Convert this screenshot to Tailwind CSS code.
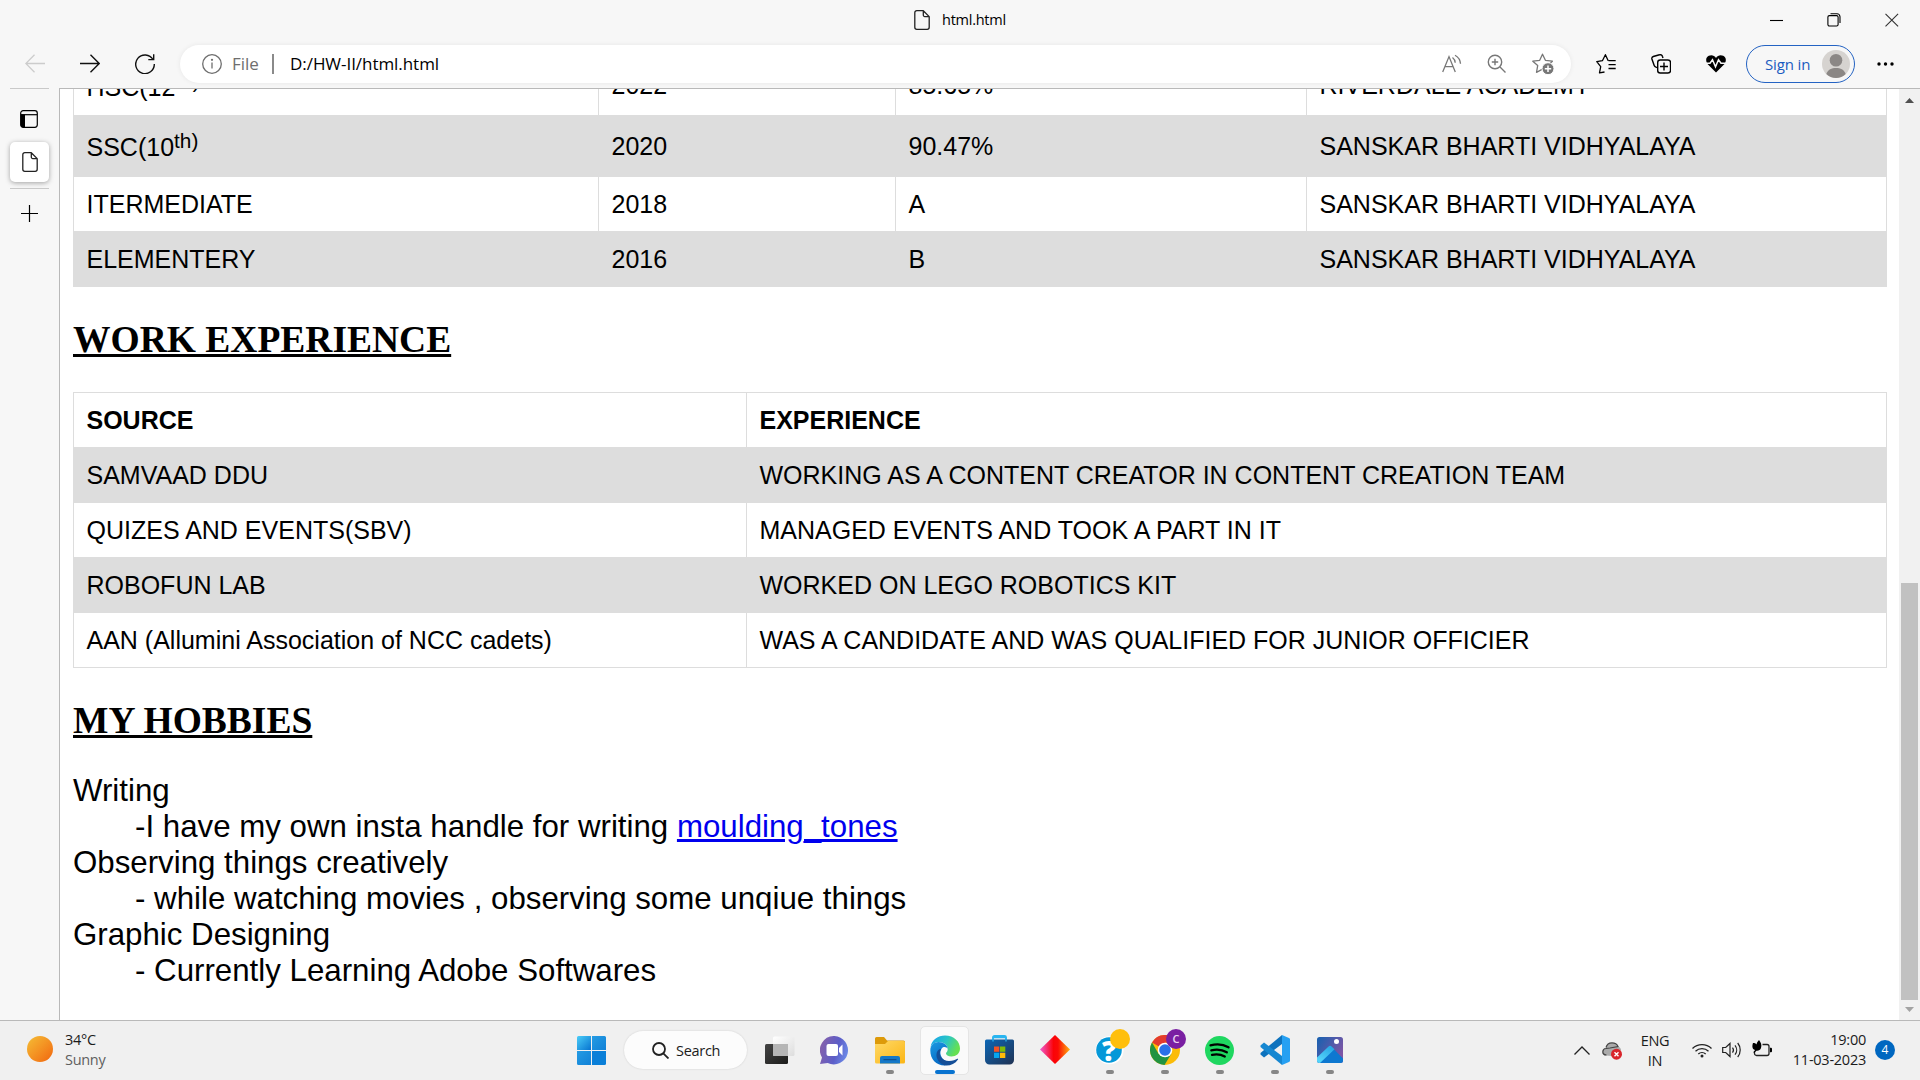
<!DOCTYPE html>
<html lang="en">
<head>
<meta charset="utf-8">
<title>html.html</title>
<script src="https://cdn.jsdelivr.net/npm/@tailwindcss/browser@4"></script>
</head>
<body class="flex h-[1080px] w-[1920px] flex-col overflow-hidden bg-[#f7f7f7] font-['Open_Sans','Noto_Sans',sans-serif] text-black">

<!-- title bar -->
<header class="flex h-10 shrink-0 items-center">
  <div class="flex flex-1 items-center gap-[12px] pl-[914px]">
    <svg class="h-5 w-4" viewBox="0 0 16 20" fill="none" stroke="#222" stroke-width="1.3" stroke-linejoin="round"><path d="M9.300.7H2.800a2 2 0 0 0-2 2v14.600a2 2 0 0 0 2 2h10.400a2 2 0 0 0 2-2V6.600zM9.300.7v4.400a1.500 1.500 0 0 0 1.500 1.500h4.400"/></svg>
    <span class="w-fit text-[14.5px] leading-5 tracking-[-0.25px]">html.html</span>
  </div>
  <div class="flex w-[150px] items-center pb-px text-black">
    <svg class="mr-[43px] h-[14px] w-[14px]" viewBox="0 0 14 14" stroke="#000" stroke-width="1.1"><path d="M0 7.500h13"/></svg>
    <svg class="mr-[44px] h-[14px] w-[14px]" viewBox="0 0 14 14" fill="none" stroke="#000" stroke-width="1.1"><rect x=".9" y="2.600" width="10.200" height="10.400" rx="1.500"/><path d="M3.500.8H10a3 3 0 0 1 3 3V10"/></svg>
    <svg class="h-[14px] w-[14px]" viewBox="0 0 14 14" stroke="#333" stroke-width="1.1"><path d="M.5.8l12.600 12.600M13.100.8L.5 13.400"/></svg>
  </div>
</header>

<!-- toolbar -->
<nav class="flex h-12 shrink-0 items-center">
  <div class="flex w-[180px] items-center gap-[35px] pl-[25px]">
    <svg class="h-5 w-5" viewBox="0 0 20 20" fill="none" stroke="#ccc" stroke-width="1.3"><path d="M20 9.500H1M9.500.8L.8 9.500l8.700 8.700"/></svg>
    <svg class="h-5 w-5" viewBox="0 0 20 20" fill="none" stroke="#111" stroke-width="1.4"><path d="M0 9.500h19M10.500.8l8.700 8.700-8.700 8.700"/></svg>
    <svg class="h-5 w-5" viewBox="0 0 20 20" fill="none" stroke="#111" stroke-width="1.4"><path d="M18 5.500A9.300 9.300 0 1 0 19.300 10M18.700.3v5.300h-5.400"/></svg>
  </div>
  <div class="flex h-[38px] w-[1391px] items-center rounded-full bg-white pl-[22px] shadow-[0_0_5px_rgba(0,0,0,0.07)]">
    <svg class="h-5 w-5" viewBox="0 0 20 20" fill="none" stroke="#6e6e6e" stroke-width="1.3"><circle cx="10" cy="10" r="9.300"/><path d="M10 8.500v6"/><circle cx="10" cy="5.800" r=".5"/></svg>
    <span class="ml-[10px] w-[30px] text-[17px] text-[#6e6e6e]">File</span>
    <span class="ml-[10px] h-5 w-[2px] bg-[#8a8a8a]"></span>
    <span class="ml-[16px] flex-1 text-[17px] tracking-[-0.050px]">D:/HW-II/html.html</span>
    <div class="flex items-center gap-[25px] pr-[17px]">
      <svg class="h-5 w-5" viewBox="0 0 20 20" fill="none" stroke="#777" stroke-width="1.3"><path d="M.7 18L7 2.600 13.300 18M3 12.700h8M10.500 3.500a7 7 0 0 1 2.700 5.300M13 1.200a10.500 10.500 0 0 1 5.500 8.600"/></svg>
      <svg class="h-5 w-5" viewBox="0 0 20 20" fill="none" stroke="#777" stroke-width="1.4"><circle cx="8" cy="8" r="6.700"/><path d="M13 13l5.500 5.500M8 4.800v6.400M4.800 8h6.400"/></svg>
      <svg class="h-[22px] w-[22px]" viewBox="0 0 22 22"><path d="M10.500 1.200l2.900 6.100 7 .9-5.100 4.700 1.100 6.200-5.900-2.900-6 3.100 1.200-6.700L.8 8.200l6.900-.9z" fill="none" stroke="#777" stroke-width="1.3" stroke-linejoin="round"/><circle cx="16" cy="15.700" r="6" fill="#777" stroke="#fff"/><path d="M16 12.500v6.400M12.800 15.700h6.400" stroke="#fff" stroke-width="1.500"/></svg>
    </div>
  </div>
  <div class="flex items-center pl-[25px]">
    <svg class="mr-[35px] h-5 w-5" viewBox="0 0 20 20" fill="none" stroke="#000" stroke-width="1.3" stroke-linejoin="round"><path d="M8.500 18l-5 .9 1.200-6.300L.8 7.600l5.600-.9 3-6 2.800 6M12.500 6.700h7.200M12.500 10.700h7.200M12.500 14.500h7.200"/></svg>
    <svg class="mr-[35px] h-5 w-5" viewBox="0 0 20 20" fill="none" stroke="#000" stroke-width="1.400"><rect x="6.700" y="6" width="12.800" height="13" rx="2.500"/><path d="M13 8.500v8M9 12.500h8M6 13.500l-1-.3a3 3 0 0 1-1.800-1.800L.9 5a2.200 2.200 0 0 1 1.400-2.500L8.500.8A2.300 2.300 0 0 1 11.400 2.300l.6 1.700"/></svg>
    <svg class="mr-[20px] h-5 w-5" viewBox="0 0 20 20"><path d="M10 18.500L1.500 10C-.8 6.500 0 3 2.800 1.800 5.500.5 8.500 1.500 10 4c1.500-2.500 4.500-3.500 7.200-2.200C20 3 20.800 6.500 18.500 10z" fill="#000"/><path d="M0 9.300h4l2.500-3.500 3 7 3-7L15 9.300h5" fill="none" stroke="#f7f7f7" stroke-width="1.500"/></svg>
    <div class="flex h-[38px] w-[109px] items-center justify-between rounded-full border-[1.5px] border-[#2463c3] pl-[18px] pr-[4px]">
      <span class="text-[15px] tracking-[-0.150px] text-[#1b5cc0]">Sign in</span>
      <svg class="h-7 w-7" viewBox="0 0 28 28"><circle cx="14" cy="14" r="14" fill="#d6d3d0"/><circle cx="14" cy="10.300" r="6.300" fill="#8b8785"/><path d="M4.300 24C6 19.500 9.500 18 14 18s8 1.500 9.700 6A14 14 0 0 1 4.300 24z" fill="#8b8785"/></svg>
    </div>
    <svg class="ml-[22px] h-1 w-[17px]" viewBox="0 0 17 4"><circle cx="2" cy="2" r="1.700"/><circle cx="8.500" cy="2" r="1.700"/><circle cx="15" cy="2" r="1.700"/></svg>
  </div>
</nav>

<div class="flex h-[932px] shrink-0">
  <!-- vertical tabs -->
  <aside class="flex w-[59px] shrink-0 flex-col items-center">
    <div class="h-px w-[39px] bg-[#c9c9c9]"></div>
    <svg class="mr-[2px] mt-[21px] h-[18px] w-[18px]" viewBox="0 0 18 18"><rect x=".7" y=".7" width="16.600" height="16.600" rx="2.500" fill="none" stroke="#000" stroke-width="1.200"/><path d="M1 4.700h16" stroke="#000" stroke-width="1.200"/><path d="M.7 4.500H5v12.800H3a2.300 2.300 0 0 1-2.300-2.300z"/></svg>
    <div class="mt-[14px] flex h-10 w-[39px] items-center justify-center rounded-[5px] bg-white shadow-[0_1px_5px_rgba(0,0,0,0.35)]">
      <svg class="h-5 w-4" viewBox="0 0 16 20" fill="none" stroke="#222" stroke-width="1.300" stroke-linejoin="round"><path d="M9.300.7H2.800a2 2 0 0 0-2 2v14.600a2 2 0 0 0 2 2h10.400a2 2 0 0 0 2-2V6.600zM9.300.7v4.400a1.500 1.500 0 0 0 1.500 1.500h4.400"/></svg>
    </div>
    <div class="mt-[6px] h-px w-[39px] bg-[#c9c9c9]"></div>
    <svg class="mt-[16px] h-[17px] w-[17px]" viewBox="0 0 17 17" stroke="#000" stroke-width="1.200"><path d="M8.500 0v17M0 8.500h17"/></svg>
  </aside>

  <!-- page -->
  <main class="flex-1 overflow-hidden border-l border-t border-[#b9b9b9] bg-white pl-[13px] font-['Liberation_Sans',Arial,sans-serif]">
    <table class="-mt-[36px] w-[1814px] table-fixed border-collapse border border-[#ddd] text-[25px] leading-[30px] [&_td]:border [&_td]:border-[#ddd] [&_td]:pl-[12.500px]">
      <colgroup><col class="w-[525px]"><col class="w-[297px]"><col class="w-[411px]"><col></colgroup>
      <tbody>
        <tr class="h-[62px]"><td class="pt-[5px] pb-0">HSC(12<sup class="-top-[8.500px] text-[20.800px]">th)</sup></td><td class="py-0">2022</td><td class="py-0">85.65%</td><td class="py-0">RIVERDALE ACADEMY</td></tr>
        <tr class="h-[61px] bg-[#ddd]"><td class="pt-[2px] pb-0">SSC(10<sup class="-top-[8.500px] text-[20.800px]">th)</sup></td><td class="pt-0 pb-px">2020</td><td class="pt-0 pb-px">90.47%</td><td class="pt-0 pb-px">SANSKAR BHARTI VIDHYALAYA</td></tr>
        <tr class="h-[55px] [&>td]:pt-0 [&>td]:pb-px"><td>ITERMEDIATE</td><td>2018</td><td>A</td><td>SANSKAR BHARTI VIDHYALAYA</td></tr>
        <tr class="h-[55px] bg-[#ddd] [&>td]:pt-0 [&>td]:pb-px"><td>ELEMENTERY</td><td>2016</td><td>B</td><td>SANSKAR BHARTI VIDHYALAYA</td></tr>
      </tbody>
    </table>

    <h2 class="mt-[31px] h-[43px] font-['Liberation_Serif',serif] text-[37.500px] font-bold leading-[43px] underline">WORK EXPERIENCE</h2>

    <table class="mt-[31px] w-[1814px] table-fixed border-collapse border border-[#ddd] text-left text-[25px] leading-[30px] [&_td]:border [&_td]:border-[#ddd] [&_td]:py-0 [&_td]:pl-[12.500px] [&_th]:border [&_th]:border-[#ddd] [&_th]:py-0 [&_th]:pl-[12.500px]">
      <colgroup><col class="w-[673px]"><col></colgroup>
      <tbody>
        <tr class="h-[55px]"><th>SOURCE</th><th>EXPERIENCE</th></tr>
        <tr class="h-[55px] bg-[#ddd]"><td>SAMVAAD DDU</td><td>WORKING AS A CONTENT CREATOR IN CONTENT CREATION TEAM</td></tr>
        <tr class="h-[55px]"><td>QUIZES AND EVENTS(SBV)</td><td>MANAGED EVENTS AND TOOK A PART IN IT</td></tr>
        <tr class="h-[55px] bg-[#ddd]"><td>ROBOFUN LAB</td><td>WORKED ON LEGO ROBOTICS KIT</td></tr>
        <tr class="h-[55px]"><td>AAN (Allumini Association of NCC cadets)</td><td>WAS A CANDIDATE AND WAS QUALIFIED FOR JUNIOR OFFICIER</td></tr>
      </tbody>
    </table>

    <h2 class="mt-[31px] h-[43px] font-['Liberation_Serif',serif] text-[37.500px] font-bold leading-[43px] underline">MY HOBBIES</h2>

    <dl class="mt-[31px] text-[31.250px] leading-[36px]">
      <dt>Writing</dt>
      <dd class="pl-[62px]">-I have my own insta handle for writing <a class="text-[#0000ee] underline">moulding_tones</a></dd>
      <dt>Observing things creatively</dt>
      <dd class="pl-[62px]">- while watching movies , observing some unqiue things</dd>
      <dt>Graphic Designing</dt>
      <dd class="pl-[62px]">- Currently Learning Adobe Softwares</dd>
    </dl>
  </main>

  <!-- scrollbar -->
  <div class="flex w-[21px] shrink-0 flex-col items-center border-t border-[#b9b9b9] bg-[#f1f1f1]">
    <svg class="mt-[9px] h-[5px] w-[9px]" viewBox="0 0 9 5"><path d="M0 5l4.500-5L9 5z" fill="#505050"/></svg>
    <div class="mt-[480px] h-[417px] w-[17px] bg-[#c1c1c1]"></div>
    <svg class="mt-[7px] h-[5px] w-[9px]" viewBox="0 0 9 5"><path d="M0 0l4.500 5L9 0z" fill="#a3a3a3"/></svg>
  </div>
</div>

<!-- taskbar -->
<footer class="flex h-[60px] shrink-0 border-t border-[#b9b9b9] bg-[#f0f0f0] text-[14.500px] leading-5 text-[#1b1b1b]">
  <div class="flex w-[564px] gap-3 pl-[27px] pt-[8px]">
    <div class="mt-[7px] h-[26px] w-[26px] rounded-full bg-linear-to-br from-[#f3bd35] to-[#f0640c]"></div>
    <div class="pt-px tracking-[-0.3px]"><p>34°C</p><p class="text-[#5f5f5f]">Sunny</p></div>
  </div>
  <div class="flex w-[60px] justify-center pt-[15px] pr-[5px]">
    <svg class="h-[29px] w-[29px]" viewBox="0 0 29 29"><defs><linearGradient id="win" x1="0" y1="0" x2="1" y2="1" gradientUnits="objectBoundingBox"><stop stop-color="#4bcdf8"/><stop offset="1" stop-color="#0673d0"/></linearGradient><linearGradient id="win2" x2="1" y2="1"><stop stop-color="#2fa9ea"/><stop offset="1" stop-color="#0673d0"/></linearGradient></defs><path d="M1.500 0H14v14H0V1.500A1.500 1.500 0 0 1 1.500 0z" fill="url(#win)"/><path d="M15 0h12.500A1.500 1.500 0 0 1 29 1.500V14H15zM0 15h14v14H1.500A1.500 1.500 0 0 1 0 27.500z" fill="url(#win2)"/><path d="M15 15h14v12.500a1.500 1.500 0 0 1-1.500 1.500H15z" fill="#0a7fd8"/></svg>
  </div>
  <div class="mt-[10px] flex h-[38px] w-[123px] items-center rounded-full bg-[#fcfcfc] pl-[28px] shadow-[0_0_2px_rgba(0,0,0,0.15)]">
    <svg class="h-[17px] w-[17px]" viewBox="0 0 17 17" fill="none" stroke="#222" stroke-width="1.800"><circle cx="7" cy="7" r="6"/><path d="M11.300 11.300l5.200 5.200"/></svg>
    <span class="ml-[7px] pt-px tracking-[-0.3px]">Search</span>
  </div>
  <div class="flex pl-[5px] [&>div]:relative [&>div]:flex [&>div]:w-[55px] [&>div]:justify-center">
    <div><svg class="mt-[15px] h-[29px] w-[30px]" viewBox="0 0 30 29"><defs><linearGradient id="tv" x1="0" y1="0" x2="1" y2="1"><stop stop-color="#444"/><stop offset="1" stop-color="#1c1c1a"/></linearGradient><linearGradient id="tw" x1="0" y1="0" x2="1" y2="1"><stop stop-color="#fff"/><stop offset="1" stop-color="#ddd"/></linearGradient></defs><rect y="8" width="23" height="20" rx="1.500" fill="url(#tv)"/><rect x="8" y=".5" width="21.500" height="19.500" rx="1.500" fill="url(#tw)"/><path d="M8 8h15v12H9.500A1.500 1.500 0 0 1 8 18.500z" fill="#b5b5b5"/></svg></div>
    <div><svg class="mt-[15px] h-[29px] w-[29px]" viewBox="0 0 29 29"><defs><linearGradient id="ch" x1="0" y1=".3" x2="1" y2=".6"><stop stop-color="#8660aa"/><stop offset=".6" stop-color="#5c5ec8"/><stop offset="1" stop-color="#6d8be8"/></linearGradient></defs><path d="M14.500 0a14.200 14.200 0 1 1-6.800 27L0 28l2-6.500A14.200 14.200 0 0 1 14.500 0z" fill="url(#ch)"/><rect x="6.500" y="8" width="11.500" height="12" rx="2" fill="#fff"/><path d="M19 12l3.500-3.500V19.500L19 16z" fill="#fff"/></svg></div>
    <div><svg class="mt-[16px] h-[27px] w-[30px]" viewBox="0 0 30 27"><defs><linearGradient id="fo" x2="1" y2="1"><stop stop-color="#ffd967"/><stop offset="1" stop-color="#fbb514"/></linearGradient></defs><path d="M0 1.500A1.500 1.500 0 0 1 1.500 0H9l3 3.500h16.500A1.500 1.500 0 0 1 30 5v3H0z" fill="#dd9a0a"/><path d="M0 7h10l3-3h15.500A1.500 1.500 0 0 1 30 5.500V25a1.500 1.500 0 0 1-1.500 1.500h-27A1.500 1.500 0 0 1 0 25z" fill="url(#fo)"/><path d="M5 26.500V21a2 2 0 0 1 2-2h16a2 2 0 0 1 2 2v5.500z" fill="#1478c8"/><path d="M9 22.700h12" stroke="#0d4f91" stroke-width="1.200" stroke-linecap="round"/></svg><i class="absolute bottom-[6px] h-1 w-2 rounded-full bg-[#868686]"></i></div>
    <div><div class="mt-[5px] flex h-[49px] w-[49px] justify-center rounded-[5px] border border-[#e5e5e5] bg-[#fafafa] pt-[8px]">
      <svg class="h-[31px] w-[30px]" viewBox="0 0 30 31"><defs><linearGradient id="eg" x1="0" y1="0" x2="1" y2=".4"><stop offset=".1" stop-color="#1aa5e8"/><stop offset=".55" stop-color="#2ac6c5"/><stop offset="1" stop-color="#66e052"/></linearGradient><linearGradient id="eb" x1="0" y1="0" x2=".5" y2="1"><stop stop-color="#1b9be2"/><stop offset="1" stop-color="#0668c4"/></linearGradient></defs><path d="M.5 12C2 4.500 8 .5 15 .5c9 0 15 6 15 13 0 5-4 8-8.500 8-3.500 0-5.500-1.500-5.500-3 0-1.200 1.700-1.500 1.700-4.500 0-4-4-7-9-7C5 7 2 9 .5 12z" fill="url(#eg)"/><path d="M.3 15.500C.3 10 4 7 8.500 7c5 0 9.200 3 9.200 7-1-2-4-2.800-6-.5-3 4-1 11 6 13.500l-3 3.500C6 30.500.3 24 .3 15.500z" fill="url(#eb)"/><path d="M11 14c-3.500 6 1 12 8 12 4 0 6.500-1 8.300-2.200.6-.4 1.100.1.700.7-3 4.500-8 6.500-13 6-6-2-9-7-8.500-11.500.3-3 2-5 4.500-5z" fill="#154f98"/></svg>
    </div><i class="absolute bottom-[6px] h-1 w-5 rounded-full bg-[#0873d0]"></i></div>
    <div><svg class="mt-[14px] h-[30px] w-[29px]" viewBox="0 0 29 30"><defs><linearGradient id="st" x2="1" y2="1"><stop stop-color="#0c66b5"/><stop offset="1" stop-color="#203253"/></linearGradient></defs><path d="M8 6V2.500A1.500 1.500 0 0 1 9.500 1h10A1.500 1.500 0 0 1 21 2.500V6" fill="none" stroke="#29b5f0" stroke-width="1.800"/><path d="M0 6A1.500 1.500 0 0 1 1.500 4.500h26A1.500 1.500 0 0 1 29 6v19a4.500 4.500 0 0 1-4.500 4.500h-20A4.500 4.500 0 0 1 0 25z" fill="url(#st)"/><path d="M8 6.500V2.500h13v4" fill="none" stroke="#29b5f0" stroke-width="1.300"/><path d="M9 11.500h5.300v5.300H9z" fill="#f35325"/><path d="M15 11.500h5.300v5.300H15z" fill="#81bc06"/><path d="M9 17.700h5.300V23H9z" fill="#05a6f0"/><path d="M15 17.700h5.300V23H15z" fill="#ffba08"/></svg></div>
    <div><svg class="mt-[14px] h-[30px] w-[30px]" viewBox="0 0 30 30"><defs><linearGradient id="di"><stop stop-color="#f05bd0"/><stop offset=".45" stop-color="#fb0308"/><stop offset=".6" stop-color="#fb0a05"/><stop offset="1" stop-color="#ffb010"/></linearGradient></defs><path d="M15 0l15 14.500L15 29 0 14.500z" fill="url(#di)"/></svg></div>
    <div><svg class="mt-[15px] h-[29px] w-[29px]" viewBox="0 0 29 29"><circle cx="14.500" cy="14.300" r="14" fill="#fff"/><circle cx="14" cy="14" r="12.800" fill="#0598d8"/></svg>
      <span class="absolute left-[13px] top-[13px] w-[28px] text-center text-[28px] font-extrabold leading-[32px] text-white">?</span>
      <i class="absolute left-[28px] top-[8px] h-5 w-5 rounded-full bg-[#ffbf0c]"></i><i class="absolute bottom-[6px] h-1 w-2 rounded-full bg-[#868686]"></i></div>
    <div><svg class="mt-[14px] h-[30px] w-[30px]" viewBox="0 0 30 30"><circle cx="15" cy="15" r="15" fill="#fbbc08"/><path d="M15 15V7.500h13A15 15 0 0 0 2 7.500z" fill="#e33b2e"/><path d="M2 7.500l6.500 11.300L15 22.500l-.5 7.500A15 15 0 0 1 2 7.500z" fill="#229342"/><path d="M14.500 30l7-11.500-6.500 3.800-6.500-3.500z" fill="#229342"/><circle cx="15" cy="15" r="7.300" fill="#fff"/><circle cx="15" cy="15" r="5.800" fill="#2a70e8"/></svg>
      <b class="absolute left-[29px] top-[8px] h-5 w-5 rounded-full bg-[#7a1fa2] text-center text-[11px] font-semibold text-[#ecd5f2]">C</b><i class="absolute bottom-[6px] h-1 w-2 rounded-full bg-[#868686]"></i></div>
    <div><svg class="mt-[15px] h-[29px] w-[29px]" viewBox="0 0 29 29"><circle cx="14.500" cy="14.500" r="14.500" fill="#1fd760"/><path d="M5.500 9.300c6-1.600 13-1 18 2M6.300 14.300c5.500-1.300 11-.7 15.500 2M7 18.800c4.500-1 9-.5 12.800 1.700" fill="none" stroke="#000" stroke-linecap="round" stroke-width="2.300"/></svg><i class="absolute bottom-[6px] h-1 w-2 rounded-full bg-[#868686]"></i></div>
    <div><svg class="mt-[14px] h-[30px] w-[30px]" viewBox="0 0 30 30"><path d="M22 0v9L4 22.500l-3.500-3V18z" fill="#0d72bd"/><path d="M22 30v-9L4 7.500l-3.500 3V12z" fill="#1687d1"/><path d="M22 0l7 3a1.700 1.700 0 0 1 1 1.700v20.600A1.700 1.700 0 0 1 29 27l-7 3z" fill="#26a0f2"/></svg><i class="absolute bottom-[6px] h-1 w-2 rounded-full bg-[#868686]"></i></div>
    <div><svg class="mt-[16px] h-[26px] w-[26px]" viewBox="0 0 26 26"><defs><linearGradient id="ph" x2="1" y2=".6"><stop stop-color="#1561b0"/><stop offset="1" stop-color="#8055a5"/></linearGradient><linearGradient id="pm" x1="0" y1="1" x2=".6" y2="0"><stop offset=".2" stop-color="#54d3fa"/><stop offset="1" stop-color="#2ba9e6"/></linearGradient></defs><rect width="26" height="26" rx="2.500" fill="url(#ph)"/><path d="M1 25l11-15.200a2 2 0 0 1 2.500 0L26 21.500v2A2.500 2.500 0 0 1 23.500 26H2.500z" fill="#0e78d0"/><path d="M0 20.500L11.300 9.700a2.500 2.500 0 0 1 3.500 0l2.700 2.600L3 26h-.5A2.500 2.500 0 0 1 0 23.500z" fill="url(#pm)"/><circle cx="19.500" cy="4.500" r="2.500" fill="#fff"/></svg><i class="absolute bottom-[6px] h-1 w-2 rounded-full bg-[#868686]"></i></div>
  </div>

  <!-- system tray -->
  <div class="ml-auto flex h-[58px] w-[346px] items-center">
    <svg class="h-[9px] w-4" viewBox="0 0 16 9" fill="none" stroke="#222" stroke-width="1.300"><path d="M.5 8.500L8 1l7.500 7.500"/></svg>
    <svg class="ml-[12px] mt-[2px] h-[18px] w-5" viewBox="0 0 20 18"><path d="M4 13.500C1 13.500 0 11.500.3 9.500.5 7.500 2 6 4 6c.5-3 3-5 6-5 2.500 0 4.700 1.200 5.700 3.500C18 5 19 6.500 19 8l-9 6z" fill="#aaa"/><path d="M4.500 13C2 13 .7 11.500.9 9.500 1.100 7.500 2.500 6.500 4 6.500l4-.5 8-1.500C15 2 12.500.8 10 .8 7 .8 4.700 2.700 4 5.500" fill="none" stroke="#444" stroke-width="1.200"/><circle cx="14.500" cy="12.200" r="5.500" fill="#d9252b"/><path d="M12.500 10.200l4 4m0-4l-4 4" stroke="#fff" stroke-width="1.400"/></svg>
    <div class="ml-[15px] w-[36px] pt-[2px] text-center tracking-[-0.3px]"><p>ENG</p><p>IN</p></div>
    <svg class="ml-[19px] h-[15px] w-5" viewBox="0 0 20 15" fill="none" stroke="#222" stroke-width="1.300"><path d="M.5 5.500a13.500 13.500 0 0 1 19 0M3.500 8.300a9.300 9.300 0 0 1 13 0M6.300 11a5.500 5.500 0 0 1 7.400 0"/><circle cx="10" cy="13" r="1.500" fill="#222" stroke="none"/></svg>
    <svg class="ml-[10px] h-4 w-5" viewBox="0 0 20 16" fill="none" stroke="#222" stroke-width="1.200"><path d="M.7 5.500h3L8 1.500v13l-4.300-4h-3zM10.500 5.500a4 4 0 0 1 0 5M13 3.300a7.500 7.500 0 0 1 0 9.400M15.700 1a11 11 0 0 1 0 14"/></svg>
    <svg class="ml-[10px] -mt-1 h-[17px] w-5" viewBox="0 0 20 17"><path d="M10.500 4.500H15A2 2 0 0 1 17 6.500v7a2 2 0 0 1-2 2H4.500a2 2 0 0 1-2-2V11" fill="none" stroke="#222" stroke-width="1.300"/><path d="M18 7.800h1a1 1 0 0 1 1 1v2.400a1 1 0 0 1-1 1h-1z"/><path d="M7 0c2 2.500 3 5 2 8-.7 2-2.500 3-4.500 2.700L2 13l-.5-.7L3 10C0 9 0 6 1 3c2 0 3 .5 3.500 1.500C4.700 3 5.500 1.500 7 0z"/></svg>
    <div class="w-[94px] text-right tracking-[-0.25px]"><p>19:00</p><p>11-03-2023</p></div>
    <span class="ml-[9px] flex h-[20px] w-[20px] items-center justify-center rounded-full bg-[#0067c0] text-[12px] text-white">4</span>
  </div>
</footer>
</body>
</html>
